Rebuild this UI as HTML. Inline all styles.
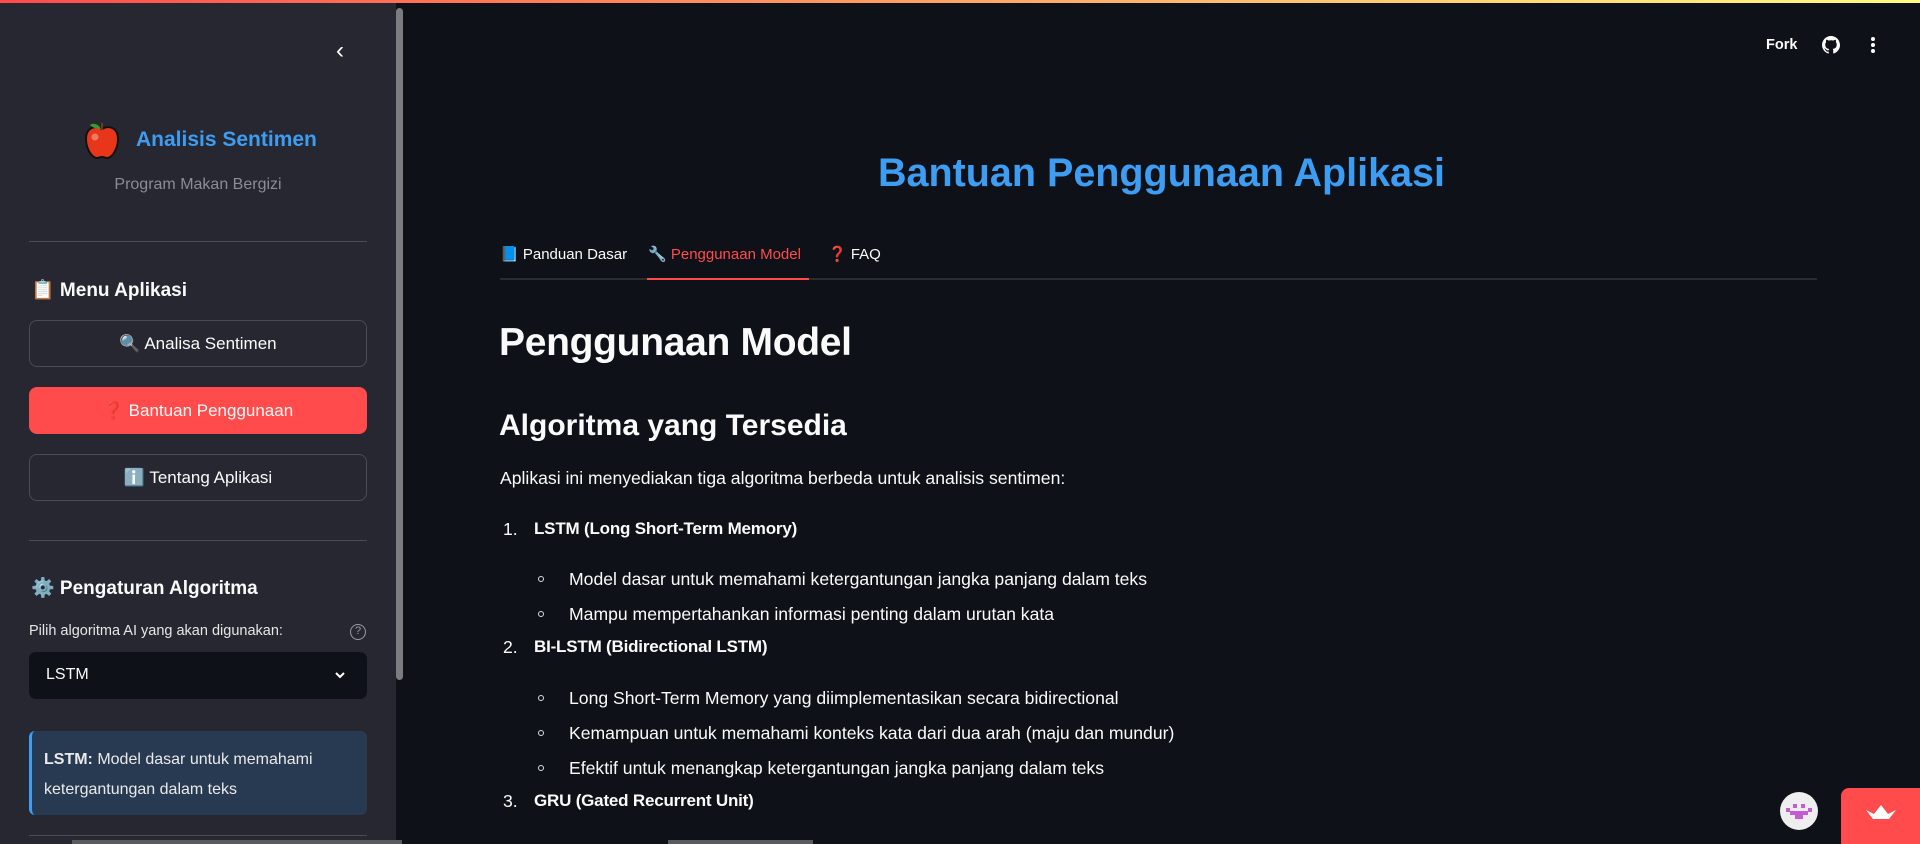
<!DOCTYPE html>
<html><head><meta charset="utf-8">
<style>
*{box-sizing:border-box;margin:0;padding:0}
body{width:1920px;height:844px;overflow:hidden;background:#0e1117;font-family:"Liberation Sans","Noto Sans CJK JP",sans-serif;color:#fafafa;position:relative}
.topbar{position:absolute;left:0;top:0;width:1920px;height:3px;background:linear-gradient(90deg,#ff4b4b,#fffd80)}
.side{position:absolute;left:0;top:3px;width:396px;height:841px;background:#262730}
.sb{position:absolute;left:396px;top:8px;width:7px;height:672px;background:#7b7b80;border-radius:4px}
.abs{position:absolute;white-space:nowrap}
.hr{position:absolute;left:29px;width:338px;height:1px;background:#4a4b55}
.btn{position:absolute;left:29px;width:338px;height:47px;border:1px solid #4a4b55;border-radius:8px;display:flex;align-items:center;justify-content:center;font-size:17px;color:#fafafa}
.n{position:absolute;font-size:17px;font-weight:bold;letter-spacing:-0.2px;white-space:nowrap}
.s{position:absolute;font-size:17.6px;white-space:nowrap}
.dot{position:absolute;width:6px;height:6px;border:1.3px solid #ddd;border-radius:50%}
</style></head><body>
<div class="topbar"></div>
<div class="side">
  <div class="abs" style="left:336px;top:34px;font-size:24px;color:#fff">&#8249;</div>
  <svg class="abs" style="left:83px;top:116px" width="38" height="42" viewBox="0 0 38 42"><path d="M19 10c-6-4-16-2-16 10 0 10 6 19 11 19 2 0 3-1 5-1s3 1 5 1c5 0 11-9 11-19 0-12-10-14-16-10z" fill="#e8361a" stroke="#111" stroke-width="2"/><path d="M18 10c-3-6-9-6-11-4 3 3 7 4 11 4z" fill="#3c9a2f"/><rect x="18" y="4" width="2" height="7" fill="#6b3b1a"/><circle cx="12" cy="18" r="3.5" fill="#f07a60"/></svg>
  <div class="abs" style="left:136px;top:125px;font-size:21px;font-weight:bold;color:#3d9df3">Analisis Sentimen</div>
  <div class="abs" style="left:0;width:396px;text-align:center;top:173px;font-size:16px;color:#8b8d94">Program Makan Bergizi</div>
  <div class="hr" style="top:238px"></div>
  <div class="abs" style="left:31px;top:275px;font-size:19px;font-weight:bold">📋 Menu Aplikasi</div>
  <div class="btn" style="top:317px">🔍 Analisa Sentimen</div>
  <div class="btn" style="top:384px;background:#ff4b4b;border-color:#ff4b4b">❓ Bantuan Penggunaan</div>
  <div class="btn" style="top:451px">ℹ️ Tentang Aplikasi</div>
  <div class="hr" style="top:537px"></div>
  <div class="abs" style="left:31px;top:573px;font-size:19px;font-weight:bold">⚙️ Pengaturan Algoritma</div>
  <div class="abs" style="left:29px;top:620px;font-size:14.5px;color:#e6e6e6">Pilih algoritma AI yang akan digunakan:</div>
  <div class="abs" style="left:350px;top:621px;width:16px;height:16px;border:1.5px solid #9a9ba3;border-radius:50%;font-size:11px;color:#9a9ba3;text-align:center;line-height:13px">?</div>
  <div class="abs" style="left:29px;top:649px;width:338px;height:47px;background:#0e1117;border-radius:7px"></div>
  <div class="abs" style="left:46px;top:663px;font-size:16px">LSTM</div>
  <svg class="abs" style="left:334px;top:667px" width="12" height="10" viewBox="0 0 12 10"><path d="M2 3l4 4 4-4" stroke="#fff" stroke-width="2" fill="none"/></svg>
  <div class="abs" style="left:29px;top:728px;width:338px;height:84px;background:#283a51;border-radius:6px;border-left:3px solid #3d9df3"></div>
  <div class="abs" style="left:44px;top:742px;font-size:16px;line-height:30px;color:#eaeaea"><b>LSTM:</b> Model dasar untuk memahami<br>ketergantungan dalam teks</div>
  <div class="hr" style="top:832px"></div>
</div>
<div class="sb"></div>
<div class="abs" style="left:72px;top:840px;width:330px;height:4px;background:#5a5b60"></div>
<div class="abs" style="left:668px;top:840px;width:145px;height:4px;background:#5a5b60"></div>
<div class="abs" style="left:1766px;top:37px;font-size:14.5px;font-weight:bold">Fork</div>
<svg class="abs" style="left:1822px;top:36px" width="18" height="18" viewBox="0 0 16 16"><path fill="#fff" d="M8 0C3.6 0 0 3.6 0 8c0 3.5 2.3 6.5 5.5 7.6.4.1.5-.2.5-.4v-1.4c-2.2.5-2.7-1-2.7-1-.4-.9-.9-1.2-.9-1.2-.7-.5.1-.5.1-.5.8.1 1.2.8 1.2.8.7 1.2 1.9.9 2.3.7.1-.5.3-.9.5-1.1-1.8-.2-3.6-.9-3.6-4 0-.9.3-1.6.8-2.1-.1-.2-.4-1 .1-2.1 0 0 .7-.2 2.2.8.6-.2 1.3-.3 2-.3s1.4.1 2 .3c1.5-1 2.2-.8 2.2-.8.4 1.1.2 1.9.1 2.1.5.6.8 1.3.8 2.1 0 3.1-1.9 3.7-3.6 3.9.3.3.5.8.5 1.5v2.2c0 .2.1.5.6.4C13.7 14.5 16 11.5 16 8c0-4.4-3.6-8-8-8z"/></svg>
<div class="abs" style="left:1871px;top:37px;width:4px;font-size:0">
<div style="width:4px;height:4px;background:#fff;border-radius:50%;margin-bottom:2px"></div><div style="width:4px;height:4px;background:#fff;border-radius:50%;margin-bottom:2px"></div><div style="width:4px;height:4px;background:#fff;border-radius:50%"></div></div>
<div class="abs" style="left:0;width:1920px;padding-left:403px;text-align:center;top:151px;font-size:39.5px;font-weight:bold;color:#3d9df3">Bantuan Penggunaan Aplikasi</div>
<div class="abs" style="left:500px;top:245px;font-size:15px">📘 Panduan Dasar</div>
<div class="abs" style="left:648px;top:245px;font-size:15px;color:#ff4b4b">🔧 Penggunaan Model</div>
<div class="abs" style="left:828px;top:245px;font-size:15px">❓ FAQ</div>
<div class="abs" style="left:500px;top:278px;width:1317px;height:2px;background:#2a2c33"></div>
<div class="abs" style="left:647px;top:278px;width:162px;height:2px;background:#ff4b4b"></div>
<div class="abs" style="left:499px;top:321px;font-size:39px;font-weight:bold;letter-spacing:-0.3px">Penggunaan Model</div>
<div class="abs" style="left:499px;top:409px;font-size:30px;font-weight:bold">Algoritma yang Tersedia</div>
<div class="s" style="left:500px;top:468px">Aplikasi ini menyediakan tiga algoritma berbeda untuk analisis sentimen:</div>
<div class="s" style="left:503px;top:519px">1.</div><div class="n" style="left:534px;top:519px">LSTM (Long Short-Term Memory)</div>
<div class="dot" style="left:538px;top:576px"></div><div class="s" style="left:569px;top:569px">Model dasar untuk memahami ketergantungan jangka panjang dalam teks</div>
<div class="dot" style="left:538px;top:611px"></div><div class="s" style="left:569px;top:604px">Mampu mempertahankan informasi penting dalam urutan kata</div>
<div class="s" style="left:503px;top:637px">2.</div><div class="n" style="left:534px;top:637px">BI-LSTM (Bidirectional LSTM)</div>
<div class="dot" style="left:538px;top:695px"></div><div class="s" style="left:569px;top:688px">Long Short-Term Memory yang diimplementasikan secara bidirectional</div>
<div class="dot" style="left:538px;top:730px"></div><div class="s" style="left:569px;top:723px">Kemampuan untuk memahami konteks kata dari dua arah (maju dan mundur)</div>
<div class="dot" style="left:538px;top:765px"></div><div class="s" style="left:569px;top:758px">Efektif untuk menangkap ketergantungan jangka panjang dalam teks</div>
<div class="s" style="left:503px;top:791px">3.</div><div class="n" style="left:534px;top:791px">GRU (Gated Recurrent Unit)</div>
<div class="abs" style="left:1780px;top:792px;width:38px;height:38px;border-radius:50%;background:#eee"></div>
<svg class="abs" style="left:1783px;top:801px" width="32" height="22" viewBox="0 0 32 22"><g fill="#c45bd0"><rect x="3" y="7" width="4" height="4"/><rect x="10" y="3" width="4" height="4"/><rect x="18" y="3" width="4" height="4"/><rect x="25" y="7" width="4" height="4"/><rect x="7" y="10" width="18" height="4"/><rect x="12" y="14" width="8" height="4"/></g></svg>
<div class="abs" style="left:1841px;top:788px;width:79px;height:56px;background:#ff4b4b;border-top-left-radius:8px"></div>
<svg class="abs" style="left:1865px;top:804px" width="32" height="18" viewBox="0 0 32 18"><path d="M1 6l7 9h16l7-9-8 4-7-9-7 9z" fill="#fff"/></svg>
</body></html>
